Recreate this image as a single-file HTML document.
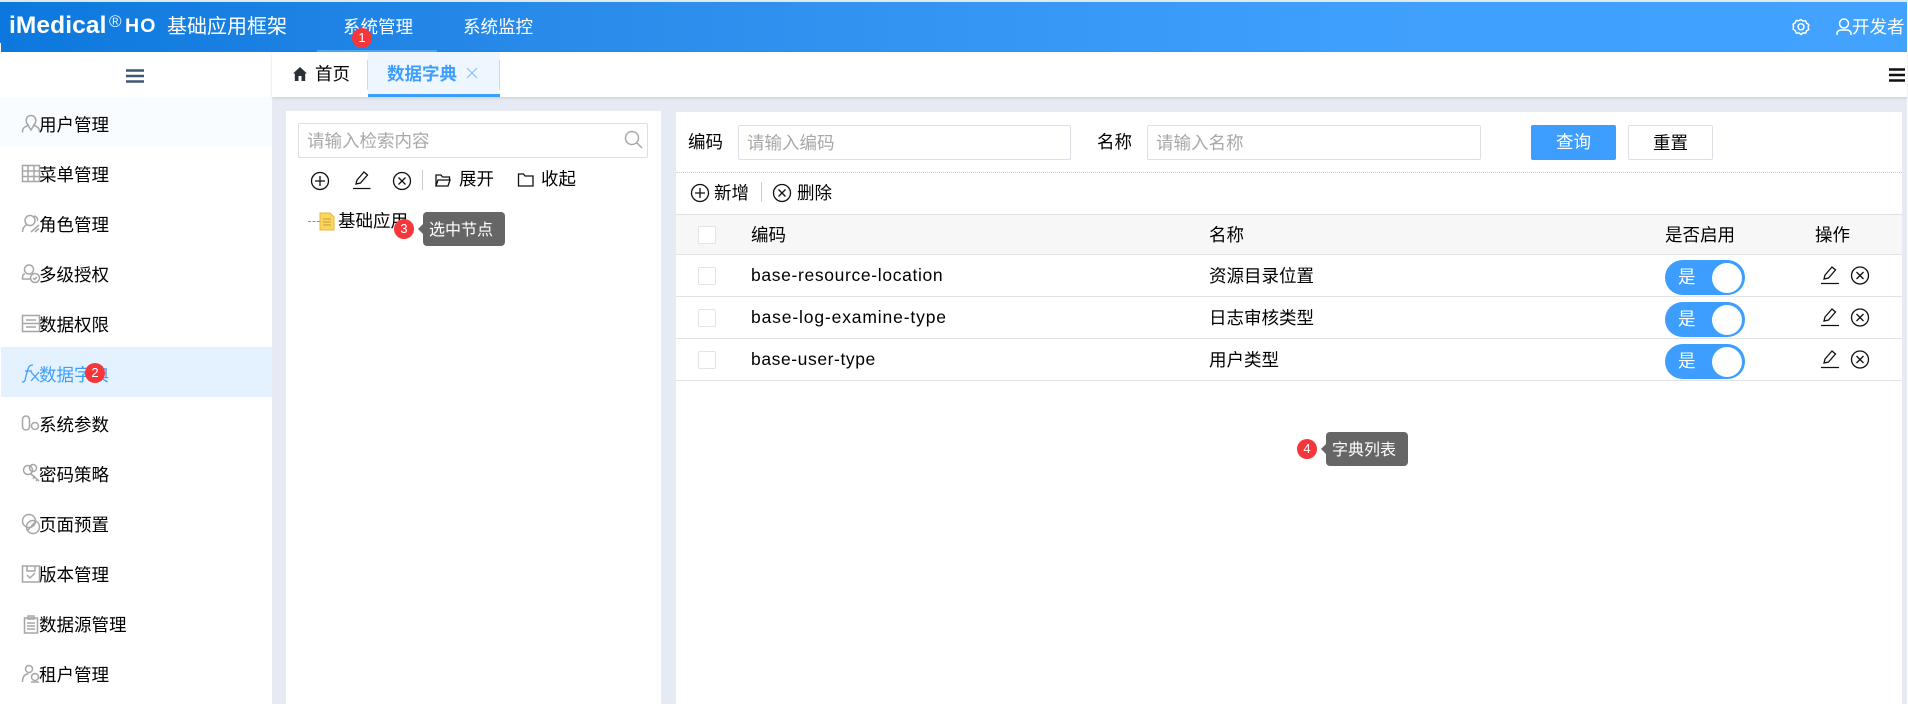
<!DOCTYPE html>
<html lang="zh"><head><meta charset="utf-8"><title>数据字典</title>
<style>
*{box-sizing:border-box;margin:0;padding:0}
html,body{width:1908px;height:709px;overflow:hidden;background:#fff}
body{position:relative;font-family:"Liberation Sans","Noto Sans CJK SC",sans-serif;font-size:17.5px;color:#000}
.a{position:absolute}
.t{position:absolute;white-space:nowrap;line-height:24px;height:24px}
.ph{color:#a8a8a8}
svg{position:absolute;overflow:visible;fill:none}
.badge{position:absolute;width:20px;height:20px;border-radius:50%;background:#f5363a;color:#fff;font-size:13px;line-height:20px;text-align:center}
.tip{position:absolute;width:82px;height:34px;background:#666;border-radius:4px;color:#fff;font-size:16px;line-height:37px;padding-left:6px}
.tip:before{content:"";position:absolute;left:-5px;top:12px;border:5px solid transparent;border-left:0;border-right-color:#666}
.inp{position:absolute;height:35px;border:1px solid #dcdfe6;border-radius:2px;background:#fff}
.cb{position:absolute;width:18px;height:18px;border:1px solid #e3e3e3;border-radius:2px;background:#fff}
.line{position:absolute;left:676px;width:1226px;height:1px;background:#e2e2e2}
.sw{position:absolute;left:1665px;width:80px;height:35px;border-radius:18px;background:#3d9eff}
.sw i{position:absolute;left:47px;top:2.5px;width:30px;height:30px;border-radius:50%;background:#fff}
.sw b{position:absolute;left:13px;top:5px;font-weight:normal;color:#fff;line-height:24px;font-size:17.5px}
</style></head><body>

<!-- header -->
<div class="a" style="left:0;top:2px;width:1907px;height:50px;background:linear-gradient(90deg,#0c78dd 0%,#2a8bea 30%,#3f9ffc 70%,#42a2ff 100%)"></div>
<div class="a" style="left:0;top:0;width:1908px;height:2px;background:#dfe9f2"></div>
<div class="a" style="left:0;top:43px;width:1px;height:9px;background:#fff"></div>
<div class="t" style="left:9px;top:14px;font-size:24.5px;font-weight:bold;color:#fff;letter-spacing:.1px">iMedical</div>
<div class="t" style="left:109px;top:10px;font-size:17px;color:#e6f3ff">®</div>
<div class="t" style="left:125px;top:14px;font-size:19.5px;font-weight:bold;color:#fff;letter-spacing:1.2px">HO</div>
<div class="t" style="left:167px;top:15px;font-size:20px;color:#fff">基础应用框架</div>
<div class="t" style="left:343px;top:15px;color:#fff">系统管理</div>
<div class="t" style="left:463px;top:15px;color:#fff">系统监控</div>
<div class="a" style="left:317px;top:50px;width:120px;height:2px;background:#4fa9f7"></div>
<div class="badge" style="left:352px;top:28px">1</div>
<svg style="left:1792px;top:18px" width="18" height="18" viewBox="0 0 18 18" stroke="#fff" stroke-width="1.5"><path d="M9 1.5l2 1.6 2.6-.3 1 2.4 2.2 1.4-.6 2.4.6 2.4-2.2 1.4-1 2.4-2.6-.3-2 1.6-2-1.6-2.6.3-1-2.4L1 11l.6-2.4L1 6.200l2.200-1.400 1-2.400 2.600.3z"/><circle cx="9" cy="8.800" r="3"/></svg>
<svg style="left:1836px;top:18px" width="16" height="18" viewBox="0 0 16 18" stroke="#fff" stroke-width="1.500"><circle cx="8" cy="5.500" r="4.500"/><path d="M1 17v-1.500c0-2 2-3.500 4-3.500h6c2 0 4 1.500 4 3.500V17"/></svg>
<div class="t" style="left:1852px;top:15px;color:#fff">开发者</div>

<!-- sidebar -->
<div class="a" style="left:0;top:97px;width:272px;height:50px;background:#f8fcff"></div>
<div class="a" style="left:1px;top:347px;width:271px;height:50px;background:#e3f2fe"></div>
<svg style="left:126px;top:69px" width="18" height="14"><path d="M0 1.500h18M0 7h18M0 12.500h18" stroke="#3e5673" stroke-width="2.500"/></svg>

<div class="t" style="left:39px;top:113px">用户管理</div>
<div class="t" style="left:39px;top:163px">菜单管理</div>
<div class="t" style="left:39px;top:213px">角色管理</div>
<div class="t" style="left:39px;top:263px">多级授权</div>
<div class="t" style="left:39px;top:313px">数据权限</div>
<div class="t" style="left:39px;top:363px;color:#3d9eff">数据字典</div>
<div class="t" style="left:39px;top:413px">系统参数</div>
<div class="t" style="left:39px;top:463px">密码策略</div>
<div class="t" style="left:39px;top:513px">页面预置</div>
<div class="t" style="left:39px;top:563px">版本管理</div>
<div class="t" style="left:39px;top:613px">数据源管理</div>
<div class="t" style="left:39px;top:663px">租户管理</div>

<svg style="left:0;top:0" width="272" height="709" stroke="#a6a6a6" stroke-width="1.500">
<path d="M31 115.500c-2.800 0-4.800 2.200-4.800 5 0 2 1 3.600 2 4.500l-4 2.500c-1.200.8-1.700 2.500-1.700 5M31 115.500c2.800 0 4.800 2.200 4.800 5 0 2-1 3.600-2 4.500l4 2.500c1.200.8 1.700 2.500 1.700 5M28.200 125.500L31 130l2.800-4.500"/>
<path d="M22.500 165.500h17v16h-17zM22.500 171h17M22.500 176.500h17M28 165.500v16M34 165.500v16"/>
<path d="M30 215.500a5 5 0 1 0 .01 0M26.500 225c-2 1-4 3-4 7M31 232l8-7M35 232l4-3.500M34 216c3 .5 4 3 3.500 5"/>
<path d="M29 265a4.500 4.500 0 1 0 .01 0M25 274c-2 0-2.500 1.500-2.500 5h9"/><circle cx="35" cy="278" r="4.500"/><path d="M33 278l1.500 1.500 2.500-2.500"/>
<path d="M22.500 315.500h17v16h-17zM22.500 323.500h17M26 320h10M26 327h10"/>
<rect x="22.500" y="416" width="7" height="14" rx="3.500"/><circle cx="35" cy="426" r="3.500"/>
<circle cx="28" cy="470" r="4.500"/><circle cx="33" cy="468" r="3.500"/><path d="M31 474l8 7M35 476l-2 3M38 479l-2 2"/>
<circle cx="29" cy="521" r="6.500"/><circle cx="33" cy="527" r="6.500"/><path d="M27 531l9-10"/>
<path d="M22.500 566h17v16h-17zM27 566v5h8v-5M27 575l3 3 5-5"/>
<path d="M24.500 618h13v15h-13zM28 616h6v3h-6zM27 623h8M27 626h8M27 629h8"/>
<circle cx="29" cy="669" r="3.500"/><path d="M22.500 682c0-5 2-8 6-8"/><circle cx="35" cy="677" r="3.500"/><path d="M31 682h8"/>
</svg>
<svg style="left:22px;top:364px" width="18" height="20" stroke="#3d9eff" stroke-width="1.300"><path d="M0 18c3 0 3-1 4-6l2-7c1-3 2-4 5-4M3 7h7M9 8l8 9M17 8l-8 9"/></svg>
<div class="badge" style="left:85px;top:363px">2</div>

<!-- content background -->
<div class="a" style="left:272px;top:97px;width:1635px;height:607px;background:#e6eaf2"></div>
<div class="a" style="left:272px;top:52px;width:1635px;height:45px;background:#fff;box-shadow:0 1px 3px rgba(0,0,0,.14)"></div>

<!-- tabs -->
<svg style="left:293px;top:67px" width="14" height="14" viewBox="0 0 14 14"><path d="M7 0L0 6.500h1.800V14h3.700V9h3v5h3.700V6.500H14z" fill="#2a2f38"/></svg>
<div class="t" style="left:315px;top:62px">首页</div>
<div class="a" style="left:368px;top:52px;width:132px;height:45px;background:#eef7ff"></div>
<div class="a" style="left:368px;top:94px;width:132px;height:3px;background:#3d9eff"></div>
<div class="a" style="left:367px;top:60px;width:1px;height:30px;background:#d8d8d8"></div>
<div class="a" style="left:499px;top:60px;width:1px;height:30px;background:#d8d8d8"></div>
<div class="t" style="left:387px;top:62px;color:#3d9eff;font-weight:bold">数据字典</div>
<svg style="left:467px;top:68px" width="10" height="10"><path d="M0 0l10 10M10 0L0 10" stroke="#7fbcf8" stroke-width="1"/></svg>
<svg style="left:1889px;top:68px" width="16" height="14"><path d="M0 1.500h16M0 7h16M0 12.500h16" stroke="#111" stroke-width="2.500"/></svg>

<!-- left panel -->
<div class="a" style="left:286px;top:111px;width:375px;height:593px;background:#fff"></div>
<div class="inp" style="left:298px;top:123px;width:350px"></div>
<div class="t ph" style="left:307px;top:129px">请输入检索内容</div>
<svg style="left:624px;top:130px" width="19" height="19" stroke="#a8a8a8" stroke-width="1.500"><circle cx="8" cy="8" r="6.500"/><path d="M12.500 12.500L18 18"/></svg>
<svg style="left:0;top:0" width="700" height="260" stroke="#111" stroke-width="1.300">
<circle cx="320" cy="181" r="8.500"/><path d="M320 176v10M315 181h10"/>
<path d="M353 188.500h17.500M356 184l1-4 7-8 3.500 3-7 8z"/>
<circle cx="402" cy="181" r="8.500"/><path d="M398.500 177.500l7 7M405.500 177.500l-7 7"/>
<path d="M436 186v-11h5l1.500 2h7v3M436 186l2-6h12l-2 6z"/>
<path d="M518.500 186v-12h5l1.500 2h8v10z"/>
</svg>
<div class="a" style="left:422px;top:170px;width:1px;height:20px;background:#ccc"></div>
<div class="t" style="left:459px;top:167px">展开</div>
<div class="t" style="left:541px;top:167px">收起</div>
<div class="a" style="left:308px;top:221px;width:12px;border-top:1px dashed #3d9eff"></div>
<svg style="left:319px;top:212px" width="16" height="19" viewBox="0 0 16 19"><path d="M1 1h10l4 4v13H1z" fill="#fbd65f" stroke="#edb438"/><path d="M4 7h8M4 10h8M4 13h8" stroke="#c99a2e"/></svg>
<div class="t" style="left:338px;top:209px">基础应用</div>
<div class="badge" style="left:394px;top:219px">3</div>
<div class="tip" style="left:423px;top:212px">选中节点</div>

<!-- right panel -->
<div class="a" style="left:676px;top:112px;width:1226px;height:592px;background:#fff"></div>
<div class="t" style="left:688px;top:130px">编码</div>
<div class="inp" style="left:738px;top:125px;width:333px"></div>
<div class="t ph" style="left:747px;top:131px">请输入编码</div>
<div class="t" style="left:1097px;top:130px">名称</div>
<div class="inp" style="left:1147px;top:125px;width:334px"></div>
<div class="t ph" style="left:1156px;top:131px">请输入名称</div>
<div class="a" style="left:1531px;top:125px;width:85px;height:35px;background:#3d9eff;border-radius:2px;color:#fff;text-align:center;line-height:35px">查询</div>
<div class="a" style="left:1628px;top:125px;width:85px;height:35px;border:1px solid #dcdfe6;border-radius:2px;text-align:center;line-height:34px">重置</div>
<div class="a" style="left:676px;top:172px;width:1226px;border-top:1px dotted #d0d0d0"></div>

<svg style="left:0;top:0" width="1900" height="400" stroke="#111" stroke-width="1.300">
<circle cx="700" cy="193" r="8.500"/><path d="M700 188v10M695 193h10"/>
<circle cx="782" cy="193" r="8.500"/><path d="M778.500 189.500l7 7M785.500 189.500l-7 7"/>
</svg>
<div class="t" style="left:714px;top:181px">新增</div>
<div class="a" style="left:761px;top:182px;width:1px;height:20px;background:#ccc"></div>
<div class="t" style="left:797px;top:181px">删除</div>

<!-- table -->
<div class="a" style="left:676px;top:214px;width:1226px;height:40px;background:#f7f7f7"></div>
<div class="line" style="top:214px"></div>
<div class="line" style="top:254px"></div>
<div class="line" style="top:296px"></div>
<div class="line" style="top:338px"></div>
<div class="line" style="top:380px"></div>
<div class="cb" style="left:698px;top:226px"></div>
<div class="cb" style="left:698px;top:267px"></div>
<div class="cb" style="left:698px;top:309px"></div>
<div class="cb" style="left:698px;top:351px"></div>
<div class="t" style="left:751px;top:223px">编码</div>
<div class="t" style="left:1209px;top:223px">名称</div>
<div class="t" style="left:1665px;top:223px">是否启用</div>
<div class="t" style="left:1815px;top:223px">操作</div>

<div class="t" style="left:751px;top:263px;letter-spacing:.65px">base-resource-location</div>
<div class="t" style="left:1209px;top:264px">资源目录位置</div>
<div class="t" style="left:751px;top:305px;letter-spacing:.85px">base-log-examine-type</div>
<div class="t" style="left:1209px;top:306px">日志审核类型</div>
<div class="t" style="left:751px;top:347px;letter-spacing:.58px">base-user-type</div>
<div class="t" style="left:1209px;top:348px">用户类型</div>

<div class="sw" style="top:260px"><b>是</b><i></i></div>
<div class="sw" style="top:302px"><b>是</b><i></i></div>
<div class="sw" style="top:344px"><b>是</b><i></i></div>

<svg style="left:0;top:0" width="1900" height="400" stroke="#111" stroke-width="1.300">
<path d="M1821 283.500h18M1824 279l1-4 7-8 3.500 3-7 8z"/><circle cx="1860" cy="275.500" r="8.500"/><path d="M1856.500 272l7 7M1863.500 272l-7 7"/>
<path d="M1821 325.500h18M1824 321l1-4 7-8 3.500 3-7 8z"/><circle cx="1860" cy="317.500" r="8.500"/><path d="M1856.500 314l7 7M1863.500 314l-7 7"/>
<path d="M1821 367.500h18M1824 363l1-4 7-8 3.500 3-7 8z"/><circle cx="1860" cy="359.500" r="8.500"/><path d="M1856.500 356l7 7M1863.500 356l-7 7"/>
</svg>

<div class="badge" style="left:1297px;top:439px">4</div>
<div class="tip" style="left:1326px;top:432px">字典列表</div>
</body></html>
